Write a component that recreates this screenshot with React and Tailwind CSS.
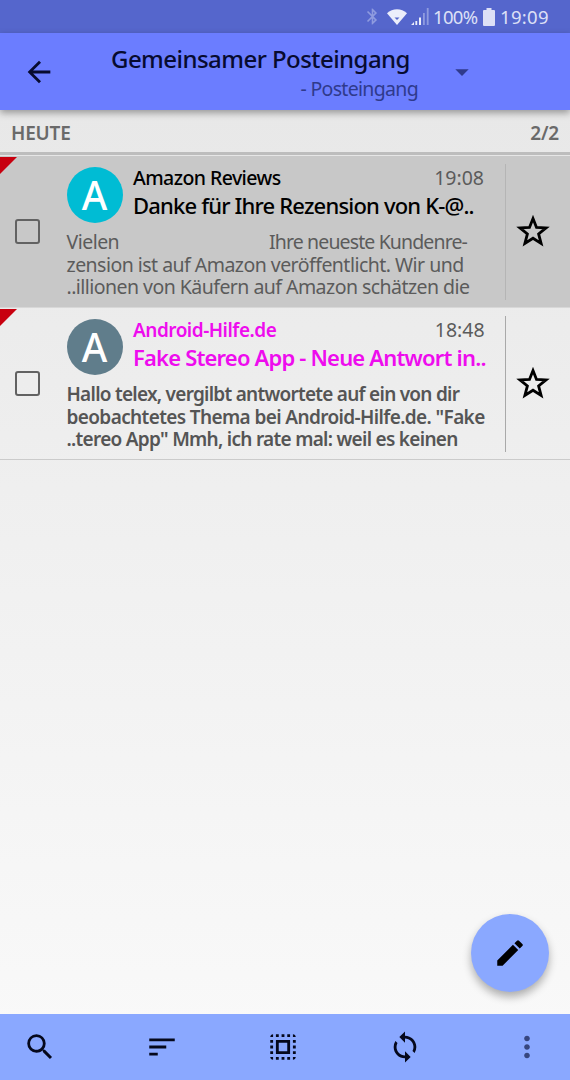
import clsx from 'clsx'
import {
  MdArrowBack,
  MdArrowDropDown,
  MdBluetooth,
  MdEdit,
  MdMoreVert,
  MdSearch,
  MdSelectAll,
  MdSort,
  MdSync,
} from 'react-icons/md'

const mails = [
  {
    sender: 'Amazon Reviews',
    senderClass: 'tracking-[-0.57px] text-[19.5px] font-medium text-black',
    time: '19:08',
    subject: 'Danke für Ihre Rezension von K-@..',
    subjectClass: 'tracking-[-0.82px] font-medium text-black',
    preview: [
      { text: 'Vielen', className: 'tracking-[-0.53px]' },
      { text: 'Ihre neueste Kundenre-', className: 'mr-[18px] tracking-[-0.87px]' },
      { text: 'zension ist auf Amazon veröffentlicht. Wir und', className: 'w-full tracking-[-0.53px]' },
      { text: '..illionen von Käufern auf Amazon schätzen die', className: 'w-full tracking-[-0.54px]' },
    ],
    previewClass: 'text-[19.5px] text-[#5b5b5b]',
    avatarClass: 'bg-[#00bcd4]',
    dividerClass: 'bg-[#b5b5b5]',
    selected: true,
  },
  {
    sender: 'Android-Hilfe.de',
    senderClass: 'tracking-[-0.5px] text-[19px] font-semibold text-[#ee0cee]',
    time: '18:48',
    subject: 'Fake Stereo App - Neue Antwort in..',
    subjectClass: 'tracking-[-0.82px] font-semibold text-[#ee0cee]',
    preview: [
      { text: 'Hallo telex, vergilbt antwortete auf ein von dir', className: 'w-full tracking-[-0.74px]' },
      { text: 'beobachtetes Thema bei Android-Hilfe.de. "Fake', className: 'w-full tracking-[-0.62px]' },
      { text: '..tereo App" Mmh, ich rate mal: weil es keinen', className: 'w-full tracking-[-0.71px]' },
    ],
    previewClass: 'text-[19px] font-semibold text-[#555]',
    avatarClass: 'bg-[#607d8b]',
    dividerClass: 'bg-[#a9a9a9]',
    selected: false,
  },
]

const StatusBar = () => (
  <div className="flex h-[33px] items-center bg-[#5566cc] pl-[363px] text-[18.5px] text-[#dde0f6]">
    <MdBluetooth className="size-[19px] text-[#8f9bdf]" />
    <svg className="ml-[5px] h-[16px] w-[20px]" viewBox="0 0 20 16">
      <path d="M10 16 0 4.2C5.6-1 14.4-1 20 4.2Z" fill="#eceefb" />
      <path d="M7.5 8.5h5L10 11Z" fill="#5566cc" />
    </svg>
    <svg className="ml-[4px] h-[17px] w-[18px]" viewBox="0 0 18 17">
      <path d="M0 17l3-3v3ZM4.4 13h1.8v4H4.4ZM8 9.500h2V17H8Z" fill="#eceefb" />
      <path d="M12 5h1.800v12H12ZM15.800 0h1.800v17h-1.800Z" fill="#8f9bdf" />
    </svg>
    <span className="ml-[4px] w-[46px] tracking-[-0.7px]">100%</span>
    <svg className="ml-[4px] h-[18px] w-[12px]" viewBox="0 0 12 18">
      <path d="M3.500 0h5v2H11a1 1 0 0 1 1 1v14a1 1 0 0 1-1 1H1a1 1 0 0 1-1-1V3a1 1 0 0 1 1-1h2.500Z" fill="#dde0f6" />
    </svg>
    <span className="ml-[5px] tracking-[0.3px]">19:09</span>
  </div>
)

const AppBar = () => (
  <header className="relative z-10 flex h-[77px] bg-[#6b7dff] shadow-[0_3px_7px_rgba(0,0,0,0.35)]">
    <button className="ml-[22px] mt-[22px] size-[34px]">
      <MdArrowBack className="size-[34px] text-[#070b30]" />
    </button>
    <div className="ml-[55px] mt-[11px] flex w-[307px] flex-col whitespace-nowrap">
      <h1 className="h-[30px] text-[24px] leading-[30px] font-medium tracking-[-0.55px] text-[#070b30]">
        Gemeinsamer Posteingang
      </h1>
      <span className="mt-[3px] self-end text-[19.5px] leading-[24px] tracking-[-0.68px] text-[#2f3a8c]">
        - Posteingang
      </span>
    </div>
    <MdArrowDropDown className="ml-[28px] mt-[23px] size-[32px] text-[#2f3a8c]" />
  </header>
)

const Star = () => (
  <svg className="size-[36px]" viewBox="0 0 36 36">
    <path
      d="M18 5.500 21.500 14.500 31 14.900 23.600 20.900 26.100 30.400 18 25.200 9.900 30.400 12.400 20.900 5 14.900 14.500 14.500Z"
      fill="none"
      stroke="#000"
      strokeWidth="2.800"
      strokeMiterlimit="10"
    />
  </svg>
)

const MailRow = ({ mail }) => (
  <li
    className={clsx(
      'relative flex h-[152px] border-b',
      mail.selected ? 'border-[#d8d8d8] bg-[#c8c8c8]' : 'border-[#cbcbcb]'
    )}
  >
    <svg className="absolute top-px left-0 size-[17px]" viewBox="0 0 17 17">
      <path d="M0 0h17L0 17Z" fill="#c8000f" />
    </svg>
    <div className="ml-[15px] mt-[63px] size-[25px] rounded-[3px] border-2 border-[#626262]" />
    <div className="ml-[26.500px] w-[418.500px] pt-[10px] whitespace-nowrap">
      <div className="flex">
        <div
          className={clsx(
            'mt-[1px] flex size-[56px] shrink-0 items-center justify-center rounded-full text-[39px] font-medium text-white',
            mail.avatarClass
          )}
        >
          A
        </div>
        <div className="ml-[10.500px] flex-1">
          <div className="flex h-[24px] items-center justify-between leading-[24px]">
            <span className={mail.senderClass}>{mail.sender}</span>
            <span className="mr-[1px] text-[19.5px] text-[#5b5b5b]">{mail.time}</span>
          </div>
          <div className={clsx('mt-px text-[22px] leading-[28px]', mail.subjectClass)}>{mail.subject}</div>
        </div>
      </div>
      <div className={clsx('mt-[8px] flex flex-wrap justify-between leading-[22.5px]', mail.previewClass)}>
        {mail.preview.map((line) => (
          <span key={line.text} className={line.className}>
            {line.text}
          </span>
        ))}
      </div>
    </div>
    <div className={clsx('mt-[8px] ml-[20px] h-[136px] w-px', mail.dividerClass)} />
    <button className="mt-[57px] ml-[8.500px] size-[36px]">
      <Star />
    </button>
  </li>
)

const BottomBar = () => (
  <nav className="flex h-[66px] items-center bg-[#8aa8ff] pl-[23px] text-[#05081c]">
    <MdSearch className="size-[34px]" />
    <MdSort className="ml-[88px] size-[34px]" />
    <MdSelectAll className="ml-[87px] size-[34px]" />
    <MdSync className="ml-[88px] size-[34px]" />
    <MdMoreVert className="ml-[88px] size-[34px] text-[#37467f]" />
  </nav>
)

const App = () => {
  return (
    <div className="relative flex h-[1080px] w-[570px] flex-col overflow-hidden bg-linear-to-b from-[#e6e6e6] to-[#fafafa] font-['Noto_Sans',sans-serif]">
      <StatusBar />
      <AppBar />
      <div className="flex h-[45px] items-center justify-between border-b-[3px] border-[#bdbdbd] px-[11px] pt-[4px] text-[19px] font-semibold tracking-[-0.2px] text-[#6a6a6a]">
        <span>HEUTE</span>
        <span>2/2</span>
      </div>
      <ul className="flex-1 border-t border-[#e6e6e6]">
        {mails.map((mail) => (
          <MailRow key={mail.sender} mail={mail} />
        ))}
      </ul>
      <button className="absolute right-[21px] bottom-[88px] flex size-[78px] items-center justify-center rounded-full bg-[#8aa8ff] shadow-[0_5px_9px_rgba(0,0,0,0.3)]">
        <MdEdit className="size-[34px] text-black" />
      </button>
      <BottomBar />
    </div>
  )
}

export default App
